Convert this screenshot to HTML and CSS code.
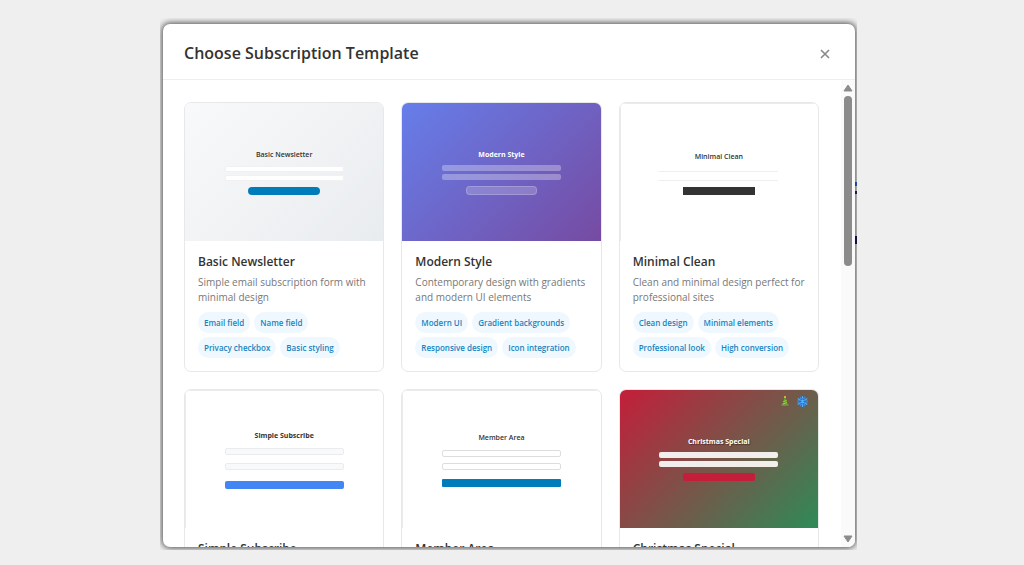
FILE: index.html
```html
<!DOCTYPE html>
<html lang="en">
<head>
  <meta charset="UTF-8">
  <meta name="viewport" content="width=device-width, initial-scale=1.0">
  <title>Choose Subscription Template</title>
  <link rel="stylesheet" href="styles.css">
</head>
<body>

  <div class="backdrop">
    <div class="modal" role="dialog" aria-labelledby="modal-title">
      <header class="modal-header">
        <h2 id="modal-title">Choose Subscription Template</h2>
        <button type="button" class="close" aria-label="Close">
          <svg width="10" height="10" viewBox="0 0 10 10"><path d="M1 1l8 8M9 1l-8 8" stroke="#888" stroke-width="1.6" fill="none"/></svg>
        </button>
      </header>

      <div class="modal-body">
        <div class="templates">

          <article class="card">
            <div class="preview basic">
              <strong>Basic Newsletter</strong>
              <span class="field"></span>
              <span class="field"></span>
              <span class="submit"></span>
            </div>
            <div class="info">
              <h3>Basic Newsletter</h3>
              <p>Simple email subscription form with minimal design</p>
              <ul class="tags">
                <li>Email field</li>
                <li>Name field</li>
                <li>Privacy checkbox</li>
                <li>Basic styling</li>
              </ul>
            </div>
          </article>

          <article class="card">
            <div class="preview modern">
              <strong>Modern Style</strong>
              <span class="field"></span>
              <span class="field"></span>
              <span class="submit"></span>
            </div>
            <div class="info">
              <h3>Modern Style</h3>
              <p>Contemporary design with gradients and modern UI elements</p>
              <ul class="tags">
                <li>Modern UI</li>
                <li>Gradient backgrounds</li>
                <li>Responsive design</li>
                <li>Icon integration</li>
              </ul>
            </div>
          </article>

          <article class="card">
            <div class="preview minimal">
              <strong>Minimal Clean</strong>
              <span class="field"></span>
              <span class="field"></span>
              <span class="submit"></span>
            </div>
            <div class="info">
              <h3>Minimal Clean</h3>
              <p>Clean and minimal design perfect for professional sites</p>
              <ul class="tags">
                <li>Clean design</li>
                <li>Minimal elements</li>
                <li>Professional look</li>
                <li>High conversion</li>
              </ul>
            </div>
          </article>

          <article class="card">
            <div class="preview simple">
              <strong>Simple Subscribe</strong>
              <span class="field"></span>
              <span class="field"></span>
              <span class="submit"></span>
            </div>
            <div class="info">
              <h3>Simple Subscribe</h3>
            </div>
          </article>

          <article class="card">
            <div class="preview member">
              <strong>Member Area</strong>
              <span class="field"></span>
              <span class="field"></span>
              <span class="submit"></span>
            </div>
            <div class="info">
              <h3>Member Area</h3>
            </div>
          </article>

          <article class="card">
            <div class="preview christmas">
              <div class="decor">
                <svg width="10" height="10" viewBox="0 0 20 20">
                  <path d="M10 2l3 5h-1l3 5h-2l4 5H3l4-5H5l3-5H7z" fill="#5f9e2f"/>
                  <path d="M3 17h14v2H3z" fill="#79b83c"/>
                  <path d="M7 11l6-2M6 16l8-3" stroke="#c9d648" stroke-width="1.5"/>
                  <circle cx="10" cy="2" r="2" fill="#f5c83a"/>
                </svg>
                <svg width="11" height="11" viewBox="0 0 20 20" fill="none" stroke="#4db4f5" stroke-width="2" stroke-linecap="round">
                  <path d="M10 1v18M2 5l16 10M18 5L2 15"/>
                  <path d="M6 2l4 4 4-4M6 18l4-4 4 4M1 9l5-1V3M19 9l-5-1V3M1 11l5 1v5M19 11l-5 1v5" stroke="#3f86e0"/>
                </svg>
              </div>
              <strong>Christmas Special</strong>
              <span class="field"></span>
              <span class="field"></span>
              <span class="submit"></span>
            </div>
            <div class="info">
              <h3>Christmas Special</h3>
            </div>
          </article>

        </div>

        <div class="scrollbar" aria-hidden="true">
          <svg width="10" height="8" viewBox="0 0 10 8"><path d="M5 1l4 6H1z" fill="#8b8b8b" stroke="#8b8b8b" stroke-linejoin="round"/></svg>
          <div class="track"><div class="thumb"></div></div>
          <svg width="10" height="8" viewBox="0 0 10 8"><path d="M5 7l4-6H1z" fill="#8b8b8b" stroke="#8b8b8b" stroke-linejoin="round"/></svg>
        </div>
      </div>
    </div>
  </div>

</body>
</html>
```
FILE: styles.css
```css
* {
  margin: 0;
  padding: 0;
  box-sizing: border-box;
}

body {
  height: 100vh;
  padding: 18px 167px 15px 160px;
  overflow: hidden;
  background: #efefef;
  color: #333;
  font-family: "Segoe UI", "Open Sans", "Noto Sans", sans-serif;
}

/* Slivers of the page behind the modal */
.backdrop {
  height: 100%;
  padding: 6px 2px 3px 3px;
  overflow: hidden;
  background:
    linear-gradient(#1a1a5e, #1a1a5e) right 218px / 2px 8px no-repeat,
    linear-gradient(#2f6fe0, #2f6fe0) right 164px / 2px 4px no-repeat,
    linear-gradient(#2b2b70, #2b2b70) right 173px / 2px 3px no-repeat;
}

.modal {
  display: flex;
  flex-direction: column;
  height: 100%;
  background: #fff;
  border-radius: 7px;
  box-shadow: 0 0 6px 1px rgba(0, 0, 0, 0.7);
  overflow: hidden;
}

/* Header */
.modal-header {
  display: flex;
  align-items: center;
  justify-content: space-between;
  flex: none;
  height: 56px;
  padding: 2px 24px 0 21px;
  border-bottom: 1px solid #eee;
}

.modal-header h2 {
  font-size: 16px;
  font-weight: 600;
  line-height: 24px;
}

.close {
  display: flex;
  padding: 4px 1px 1px;
  border: none;
  background: none;
  cursor: pointer;
}

/* Body */
.modal-body {
  display: flex;
  flex: 1;
  min-height: 0;
}

.templates {
  display: grid;
  grid-template-columns: repeat(3, 1fr);
  grid-auto-rows: max-content;
  gap: 17px;
  flex: 1;
  min-width: 0;
  padding: 22px 22px 22px 21px;
  overflow: auto;
  scrollbar-width: none;
}

.card {
  border: 1px solid #e6e8ea;
  border-radius: 7px;
  background: #fff;
  overflow: hidden;
}

.info {
  padding: 12px 13px 13px;
}

.info h3 {
  margin-bottom: 4px;
  font-size: 12px;
  font-weight: 600;
  line-height: 18px;
}

.info p {
  margin-bottom: 7px;
  color: #777;
  font-size: 10px;
  line-height: 15px;
}

.tags {
  display: flex;
  flex-wrap: wrap;
  gap: 4px;
  list-style: none;
}

.tags li {
  padding: 0 6px;
  border-radius: 11px;
  background: #f0f8ff;
  color: #1685bf;
  font-size: 8px;
  font-weight: 600;
  line-height: 21px;
  white-space: nowrap;
}

/* Form thumbnails */
.preview {
  position: relative;
  display: flex;
  flex-direction: column;
  align-items: center;
  justify-content: center;
  height: 138px;
}

.preview strong {
  margin-bottom: 6px;
  font-size: 7px;
  font-weight: 600;
  line-height: 10px;
}

.field {
  width: 60%;
  height: 6px;
  margin-bottom: 3px;
  border-radius: 2px;
}

.submit {
  width: 36%;
  height: 8px;
  margin-top: 3px;
}

.basic {
  background: linear-gradient(135deg, #f8f9fa, #e9ecef);
}
.basic .field {
  background: #fff;
  border: 1px solid #f0f1f3;
}
.basic .submit {
  border-radius: 4px;
  background: #007cba;
}

.modern {
  background: linear-gradient(135deg, #667eea, #764ba2);
  color: #fff;
}
.modern strong,
.christmas strong {
  margin-bottom: 5px;
  font-weight: 700;
}
.modern .field {
  background: rgba(255, 255, 255, 0.3);
}
.modern .submit {
  height: 9px;
  border: 1px solid rgba(255, 255, 255, 0.2);
  border-radius: 4px;
  background: rgba(255, 255, 255, 0.2);
}

.minimal,
.simple,
.member {
  padding-top: 2px;
  box-shadow: inset 1px 1px #ebebeb;
}

.minimal strong {
  margin-bottom: 4px;
}
.minimal .field {
  border-bottom: 1px solid #eee;
  border-radius: 0;
}
.minimal .submit {
  background: #333;
}

.simple strong,
.member strong {
  margin-bottom: 7px;
}
.simple strong {
  font-weight: 700;
}
.simple .field {
  height: 7px;
  margin-bottom: 8px;
  border: 1px solid #e9ebed;
  background: #f8f9fa;
}
.simple .submit {
  width: 60%;
  border-radius: 2px;
  background: #4285f4;
}

.member .field {
  height: 7px;
  margin-bottom: 6px;
  border: 1px solid #ddd;
}
.member .submit {
  width: 60%;
  border-radius: 1px;
  background: #007cba;
}

.christmas {
  background: linear-gradient(135deg, #c41e3a, #2e8b57);
  color: #fff;
}
.christmas strong {
  text-shadow: 1px 1px 1px rgba(0, 0, 0, 0.4);
}
.christmas .field {
  background: #f1eeec;
}
.christmas .submit {
  border-radius: 2px;
  background: #c41e3a;
}

.decor {
  position: absolute;
  top: 6px;
  right: 10px;
  display: flex;
  gap: 7px;
}

/* Scrollbar */
.scrollbar {
  display: flex;
  flex-direction: column;
  align-items: center;
  gap: 4px;
  width: 14px;
  padding: 4px 0;
  background: #fafafa;
}

.track {
  flex: 1;
  width: 8px;
}

.thumb {
  height: 39%;
  border-radius: 4px;
  background: #8b8b8b;
}
```
